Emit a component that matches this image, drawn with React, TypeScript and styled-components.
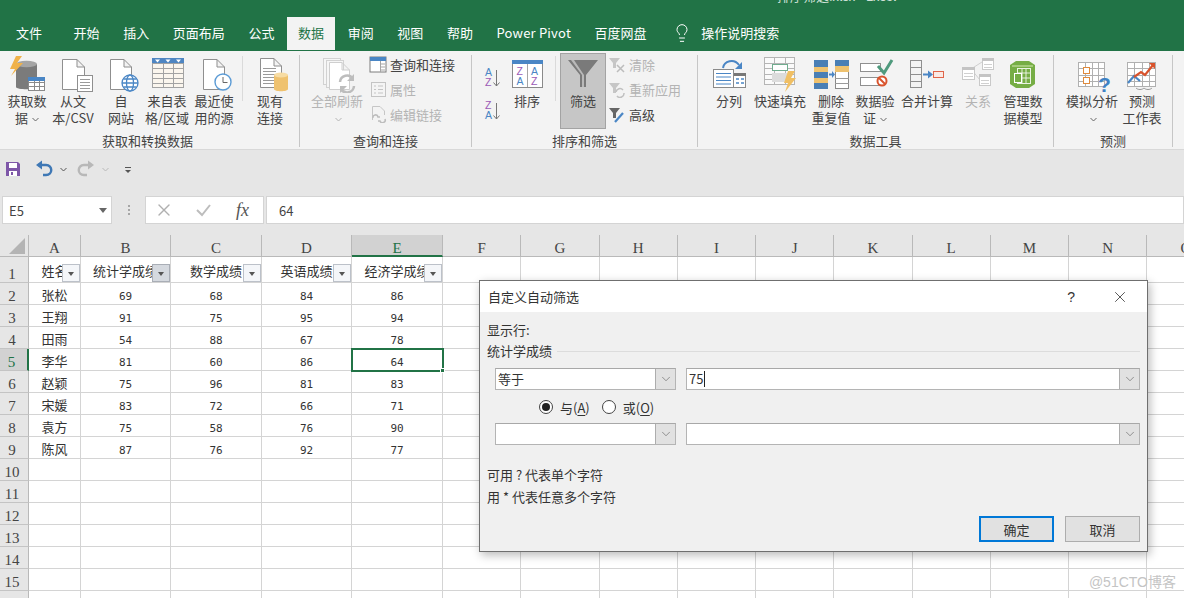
import React from "react";
import styled, { createGlobalStyle } from "styled-components";
import { Lightbulb, X, ChevronDown } from "lucide-react";

const CJK = `"Noto Sans CJK SC", "Noto Sans", sans-serif`;

const Global = createGlobalStyle`
  html, body { margin: 0; padding: 0; height: 598px; overflow: hidden; background: #fff; }
  body { font-family: ${CJK}; }
  * { box-sizing: border-box; }
`;

const Page = styled.div`
  position: relative;
  width: 1184px;
  height: 598px;
  overflow: hidden;
  display: flex;
  flex-direction: column;
  background: #e6e6e6;
`;

const TitleBar = styled.div`
  height: 51px;
  background: #217346;
  flex: none;
  display: flex;
  flex-direction: column;
  overflow: hidden;
`;
const CutTitle = styled.div`
  height: 28px;
  margin-top: -11px;
  padding-left: 777px;
  color: #cfe0d6;
  font-size: 13px;
  line-height: 13px;
  white-space: nowrap;
  flex: none;
`;
const Tabs = styled.div`
  display: flex;
  align-items: stretch;
  height: 33px;
  padding-left: 5px;
  gap: 1.6px;
  flex: none;
`;
const Tab = styled.div<{ $active?: boolean; $gapAfter?: number; $spaced?: boolean }>`
  padding: 0 11px 2px;
  display: flex;
  align-items: center;
  font-size: 13px;
  white-space: nowrap;
  letter-spacing: ${(p) => (p.$spaced ? "0.2px" : "0")};
  color: ${(p) => (p.$active ? "#217346" : "#fff")};
  background: ${(p) => (p.$active ? "#f3f3f3" : "transparent")};
  margin-right: ${(p) => p.$gapAfter ?? 0}px;
`;
const SearchHint = styled.div`
  display: flex;
  align-items: center;
  gap: 9px;
  margin-left: 13px;
  padding-bottom: 2px;
  color: #fff;
  font-size: 13px;
  white-space: nowrap;
`;

const Ribbon = styled.div`
  height: 99px;
  flex: none;
  background: #f3f3f3;
  display: flex;
  border-bottom: 1px solid #d8d8d8;
  box-shadow: 0 1px 0 #dcdcdc;
`;
const Group = styled.div<{ $w: number; $pr?: number }>`
  width: ${(p) => p.$w}px;
  height: 92px;
  margin-top: 4px;
  flex: none;
  display: flex;
  flex-direction: column;
  border-right: 1px solid #c6c6c6;
  padding-right: ${(p) => p.$pr ?? 0}px;
`;
const GroupBody = styled.div<{ $pl?: number }>`
  flex: 1;
  display: flex;
  padding-left: ${(p) => p.$pl ?? 0}px;
  min-height: 0;
`;
const GroupLabel = styled.div`
  height: 12px;
  line-height: 12px;
  font-size: 13px;
  color: #444;
  text-align: center;
  white-space: nowrap;
`;
const LargeButton = styled.div<{ $w: number; $off?: boolean }>`
  width: ${(p) => p.$w}px;
  flex: none;
  display: flex;
  flex-direction: column;
  align-items: center;
  color: ${(p) => (p.$off ? "#b4b4b4" : "#444")};
`;
const IconSlot = styled.div`
  height: 38px;
  flex: none;
  display: flex;
`;
const BtnText = styled.div`
  font-size: 13px;
  line-height: 16.5px;
  text-align: center;
  white-space: nowrap;
`;
const Caret = styled.svg`
  display: inline-block;
  width: 7px;
  height: 5px;
  vertical-align: 1px;
  margin-left: 4px;
`;
const GroupSep = styled.div<{ $l: number; $r: number }>`
  width: 1px;
  height: 45px;
  margin: 1px ${(p) => p.$r}px 0 ${(p) => p.$l}px;
  background: #dadada;
  flex: none;
`;
const SmallList = styled.div<{ $ml: number }>`
  margin-top: -3px;
  margin-left: ${(p) => p.$ml}px;
  display: flex;
  flex-direction: column;
`;
const SmallRow = styled.div<{ $off?: boolean }>`
  height: 25px;
  display: flex;
  align-items: center;
  gap: 3px;
  font-size: 13px;
  white-space: nowrap;
  color: ${(p) => (p.$off ? "#b4b4b4" : "#444")};
`;
const SortStack = styled.div`
  width: 25px;
  margin-left: 11px;
  display: flex;
  flex-direction: column;
  gap: 9px;
  padding-top: 11px;
`;
const FilterButton = styled.div`
  width: 46px;
  height: 76px;
  margin-top: -2px;
  background: #c6c6c6;
  border: 1px solid #a3a3a3;
  display: flex;
  flex-direction: column;
  align-items: center;
  color: #444;
  flex: none;
`;
const FilterIconSlot = styled.div`
  height: 39px;
  flex: none;
`;

const Qat = styled.div`
  height: 46px;
  flex: none;
  display: flex;
  align-items: flex-start;
  padding: 10px 0 0 5px;
  background: #e6e6e6;
`;
const QatCaret = styled.svg<{ $ml: number; $mr: number }>`
  width: 7px;
  height: 5px;
  margin: 7px ${(p) => p.$mr}px 0 ${(p) => p.$ml}px;
  flex: none;
`;

const FormulaRow = styled.div`
  height: 39px;
  flex: none;
  display: flex;
  align-items: flex-start;
  padding-left: 2px;
  background: #e6e6e6;
`;
const NameBox = styled.div`
  width: 110px;
  height: 28px;
  background: #fff;
  border: 1px solid #d4d4d4;
  display: flex;
  align-items: center;
  justify-content: space-between;
  padding: 0 4px 0 6px;
  font-size: 13px;
  color: #444;
`;
const Dots = styled.div`
  width: 33px;
  height: 28px;
  display: flex;
  flex-direction: column;
  align-items: center;
  justify-content: center;
  gap: 2px;
  & > i {
    width: 2px;
    height: 2px;
    background: #a6a6a6;
    display: block;
  }
`;
const FnBox = styled.div`
  width: 119px;
  height: 28px;
  background: #fff;
  border: 1px solid #d4d4d4;
  display: flex;
  align-items: center;
  padding-left: 8px;
  gap: 18px;
  flex: none;
`;
const FxText = styled.span`
  font-family: "Liberation Serif", serif;
  font-style: italic;
  font-size: 18px;
  color: #555;
  margin-left: 4px;
`;
const FormulaBox = styled.div`
  flex: 1;
  height: 28px;
  margin-left: 2px;
  background: #fff;
  border: 1px solid #d4d4d4;
  display: flex;
  align-items: center;
  padding-left: 12px;
  font-size: 13px;
  color: #444;
`;

const Sheet = styled.div`
  display: grid;
  grid-template-columns: 29px 52px 90px 91px 90px 91px repeat(10, 78.25px);
  grid-template-rows: 22px 26px repeat(15, 22px);
  background: #fff;
  flex: none;
  overflow: hidden;
`;
const Corner = styled.div`
  background: #e6e6e6;
  border-right: 1px solid #b9b9b9;
  border-bottom: 1px solid #b9b9b9;
  display: flex;
  align-items: flex-end;
  justify-content: flex-end;
  padding: 0 3px 2px 0;
`;
const ColHead = styled.div<{ $sel?: boolean }>`
  background: ${(p) => (p.$sel ? "#d2d2d2" : "#e6e6e6")};
  border-right: 1px solid #b9b9b9;
  border-bottom: ${(p) => (p.$sel ? "2px solid #217346" : "1px solid #b9b9b9")};
  color: ${(p) => (p.$sel ? "#217346" : "#444")};
  font-family: "Liberation Serif", serif;
  font-size: 15px;
  text-align: center;
  line-height: 26px;
`;
const RowHead = styled.div<{ $sel?: boolean }>`
  background: ${(p) => (p.$sel ? "#d2d2d2" : "#e6e6e6")};
  border-right: ${(p) => (p.$sel ? "2px solid #217346" : "1px solid #b9b9b9")};
  border-bottom: 1px solid #c4c4c4;
  color: ${(p) => (p.$sel ? "#217346" : "#444")};
  font-family: "Liberation Serif", serif;
  font-size: 15px;
  display: flex;
  align-items: flex-end;
  justify-content: center;
  padding: 0 4px 0 0;
  line-height: 15px;
`;
const Cell = styled.div<{ $sel?: boolean; $num?: boolean }>`
  position: relative;
  border-right: 1px solid #d4d4d4;
  border-bottom: 1px solid #d4d4d4;
  font-family: ${(p) => (p.$num ? `"DejaVu Sans Mono", monospace` : CJK)};
  font-size: ${(p) => (p.$num ? "11px" : "13px")};
  color: #333;
  text-align: center;
  white-space: nowrap;
  overflow: ${(p) => (p.$sel ? "visible" : "hidden")};
  display: flex;
  align-items: flex-end;
  justify-content: center;
  line-height: ${(p) => (p.$num ? "15px" : "18px")};
  ${(p) => (p.$sel ? "outline: 2px solid #217346; outline-offset: -1px; z-index: 2;" : "")}
`;
const HeaderCell = styled(Cell)`
  align-items: flex-start;
  padding-top: 5px;
  line-height: 18px;
`;
const FillHandle = styled.span`
  position: absolute;
  right: -3px;
  bottom: -3px;
  width: 5px;
  height: 5px;
  background: #217346;
  border: 1px solid #fff;
`;
const FilterToggle = styled.span<{ $on?: boolean }>`
  position: absolute;
  right: 0;
  top: 7px;
  width: 18px;
  height: 18px;
  background: ${(p) => (p.$on ? "#d5d9df" : "#f4f6f9")};
  border: 1px solid ${(p) => (p.$on ? "#a9aeb6" : "#bcc1c9")};
  display: flex;
  align-items: center;
  justify-content: center;
  &::after {
    content: "";
    border-left: 3.5px solid transparent;
    border-right: 3.5px solid transparent;
    border-top: 4px solid #555;
    margin-top: 2px;
  }
`;

const Dialog = styled.div`
  position: absolute;
  left: 479px;
  top: 280px;
  width: 669px;
  height: 272px;
  background: #f0f0f0;
  border: 1px solid #6f6f6f;
  box-shadow: 2px 3px 9px rgba(0, 0, 0, 0.28);
  z-index: 5;
  display: flex;
  flex-direction: column;
  color: #333;
  font-size: 13px;
`;
const DialogTitle = styled.div`
  height: 31px;
  background: #fff;
  flex: none;
  display: flex;
  align-items: center;
  padding: 0 18px 0 8px;
  color: #333;
`;
const DialogTitleText = styled.div`
  flex: 1;
`;
const HelpMark = styled.span`
  font-family: "Liberation Sans", sans-serif;
  font-size: 14px;
  margin-right: 36px;
`;
const DialogBody = styled.div`
  flex: 1;
  padding: 9px 7px 0 7px;
  display: flex;
  flex-direction: column;
`;
const BodyLine = styled.div<{ $mt?: number }>`
  line-height: 18px;
  margin-top: ${(p) => p.$mt ?? 0}px;
  white-space: nowrap;
`;
const FieldTitle = styled.div`
  margin-top: 3px;
  display: flex;
  align-items: center;
  gap: 5px;
  line-height: 18px;
  &::after {
    content: "";
    flex: 1;
    height: 1px;
    background: #dcdcdc;
  }
`;
const ComboRow = styled.div<{ $mt: number }>`
  display: flex;
  gap: 10px;
  margin-top: ${(p) => p.$mt}px;
  padding-left: 8px;
`;
const Combo = styled.div<{ $w: number }>`
  width: ${(p) => p.$w}px;
  height: 22px;
  background: #fff;
  border: 1px solid #b4b4b4;
  border-top-color: #a8a8a8;
  display: flex;
  align-items: stretch;
  flex: none;
`;
const ComboValue = styled.div`
  flex: 1;
  padding-left: 2px;
  display: flex;
  align-items: center;
  line-height: 18px;
`;
const Caretline = styled.span`
  width: 1px;
  height: 16px;
  background: #222;
  margin-left: 1px;
`;
const ComboArrow = styled.div`
  width: 20px;
  background: #e1e1e1;
  border-left: 1px solid #adadad;
  display: flex;
  align-items: center;
  justify-content: center;
  color: #555;
`;
const RadioRow = styled.div`
  display: flex;
  align-items: center;
  height: 18px;
  margin-top: 8px;
  padding-left: 52px;
`;
const Radio = styled.span<{ $on?: boolean }>`
  width: 14px;
  height: 14px;
  border-radius: 50%;
  border: 1px solid #444;
  background: #fff;
  margin-right: 7px;
  flex: none;
  display: flex;
  align-items: center;
  justify-content: center;
  &::after {
    content: "";
    width: 8px;
    height: 8px;
    border-radius: 50%;
    background: ${(p) => (p.$on ? "#222" : "transparent")};
  }
`;
const RadioText = styled.span<{ $mr?: number }>`
  margin-right: ${(p) => p.$mr ?? 0}px;
  white-space: nowrap;
  & u {
    text-underline-offset: 2px;
  }
`;
const DialogButtons = styled.div`
  display: flex;
  justify-content: flex-end;
  gap: 11px;
  margin-top: 10px;
`;
const DlgButton = styled.div<{ $primary?: boolean }>`
  width: 75px;
  height: 26px;
  background: #e1e1e1;
  border: ${(p) => (p.$primary ? "2px solid #0078d7" : "1px solid #adadad")};
  display: flex;
  align-items: center;
  justify-content: center;
  color: #333;
`;
const Watermark = styled.div`
  position: absolute;
  right: 8px;
  bottom: 7px;
  font-family: "Liberation Sans", ${CJK};
  font-size: 14px;
  color: #c4c4c4;
  z-index: 6;
  line-height: 18px;
`;

/* ---------- icons ---------- */
const G = "#8f8f8f";
const BL = "#4a86c5";
const Y = "#efc26f";

const Page1 = ({ x, y, w, h, c = G }: { x: number; y: number; w: number; h: number; c?: string }) => (
  <path d={`M${x + 0.5} ${y + 0.5}H${x + w - 8}L${x + w - 0.5} ${y + 8}V${y + h - 0.5}H${x + 0.5}ZM${x + w - 8} ${y + 0.5}V${y + 8}H${x + w - 0.5}`} fill="#fff" stroke={c} strokeWidth="1" />
);
const Lines = ({ x, y, w, n, step = 3, c = "#9a9a9a" }: { x: number; y: number; w: number; n: number; step?: number; c?: string }) => (
  <g stroke={c} strokeWidth="1">
    {Array.from({ length: n }).map((_, i) => (
      <path key={i} d={`M${x} ${y + i * step + 0.5}H${x + w}`} />
    ))}
  </g>
);
const Ico = ({ w, children, h = 38 }: { w: number; h?: number; children: React.ReactNode }) => (
  <svg width={w} height={h} viewBox={`0 0 ${w} ${h}`} style={{ display: "block" }}>
    {children}
  </svg>
);
const GridLines = ({ x, y, w, h, cols, rows, c = "#a8a8a8" }: { x: number; y: number; w: number; h: number; cols: number; rows: number; c?: string }) => (
  <g stroke={c} strokeWidth="1" fill="none">
    {Array.from({ length: cols - 1 }).map((_, i) => (
      <path key={"c" + i} d={`M${Math.round(x + ((i + 1) * w) / cols) + 0.5} ${y}V${y + h}`} />
    ))}
    {Array.from({ length: rows - 1 }).map((_, i) => (
      <path key={"r" + i} d={`M${x} ${Math.round(y + ((i + 1) * h) / rows) + 0.5}H${x + w}`} />
    ))}
    <rect x={x + 0.5} y={y + 0.5} width={w - 1} height={h - 1} />
  </g>
);

const IGetData = () => (
  <Ico w={44}>
    <path d="M11 9V32C11 35 32 35 32 32V9Z" fill="#7b7b7b" />
    <ellipse cx="21.5" cy="9" rx="10.5" ry="3.2" fill="#a5a5a5" />
    <path d="M17 1H11L5 14H10L6 21L18 8H12Z" fill="#f0b24a" />
    <rect x="23" y="22" width="17" height="14" fill="#fff" />
    <GridLines x={23} y={22} w={17} h={14} cols={3} rows={3} c="#8a8a8a" />
    <rect x="23" y="22" width="17" height="4" fill={BL} />
  </Ico>
);
const IText = () => (
  <Ico w={48}>
    <Page1 x={13} y={4} w={23} h={31} />
    <rect x="28.5" y="20.5" width="15" height="16" fill="#fff" stroke={G} />
    <Lines x={31} y={24} w={10} n={4} />
  </Ico>
);
const IWeb = () => (
  <Ico w={48}>
    <Page1 x={13} y={4} w={22} h={31} />
    <g fill="#fff" stroke={BL} strokeWidth="1.3">
      <circle cx="33" cy="28" r="8" />
      <ellipse cx="33" cy="28" rx="3.5" ry="8" />
      <path d="M25 28H41M26.5 24H39.5M26.5 32H39.5" fill="none" />
    </g>
  </Ico>
);
const ITable = () => (
  <Ico w={44}>
    <rect x="7" y="3" width="32" height="30" fill="#fbf6ee" />
    <GridLines x={7} y={3} w={32} h={30} cols={3} rows={6} c="#a3a3a3" />
    <rect x="7" y="3" width="32" height="5" fill="#4f86c2" />
    <path d="M10 4.5h5l-2.5 3zM20.500 4.500h5l-2.500 3zM31 4.500h5l-2.500 3z" fill="#fff" />
  </Ico>
);
const IRecent = () => (
  <Ico w={50}>
    <Page1 x={14} y={4} w={22} h={31} />
    <circle cx="34" cy="27" r="8" fill="#fff" stroke="#5b9bd5" strokeWidth="1.4" />
    <path d="M34 22V27.500H38.500" fill="none" stroke="#666" strokeWidth="1" />
  </Ico>
);
const IExisting = () => (
  <Ico w={50}>
    <Page1 x={15} y={3} w={22} h={30} />
    <Lines x={18} y={13} w={13} n={6} step={3} />
    <path d="M29 20V34C29 37 43 37 43 34V20Z" fill={Y} />
    <ellipse cx="36" cy="20" rx="7" ry="2.500" fill="#f7dca3" />
  </Ico>
);
const IRefreshAll = () => (
  <Ico w={54}>
    <rect x="13.500" y="3.500" width="17" height="26" fill="#f6f6f6" stroke="#d2d2d2" />
    <rect x="16.500" y="5.500" width="17" height="27" fill="#f6f6f6" stroke="#d2d2d2" />
    <Page1 x={19} y={7} w={21} h={28} c="#cfcfcf" />
    <path d="M30 27A7 7 0 0 1 43 24M44 31A7 7 0 0 1 31 34" fill="none" stroke="#bdbdbd" strokeWidth="2.500" />
    <path d="M44 19V26H37ZM30 38V31H37Z" fill="#bdbdbd" />
  </Ico>
);
const IQuery = () => (
  <Ico w={18} h={17}>
    <rect x="1" y="1" width="16" height="15" fill="#fff" stroke="#7d7d7d" />
    <rect x="1" y="1" width="16" height="4" fill={BL} />
    <path d="M11.500 5V16M12 8H16M12 11H16M12 14H16" stroke="#a5a5a5" fill="none" />
  </Ico>
);
const IProps = () => (
  <Ico w={18} h={17}>
    <rect x="2.500" y="1.500" width="14" height="14" fill="#f4f4f4" stroke="#c4c4c4" />
    <path d="M5 5H7M5 8.500H7M5 12H7M9 5H14M9 8.500H14M9 12H14" stroke="#c4c4c4" />
  </Ico>
);
const ILinks = () => (
  <Ico w={18} h={17}>
    <path d="M3.500 0.500H11L15.500 5V9M3.500 0.500V14" fill="none" stroke="#c6c6c6" />
    <path d="M4 12A2.500 2.500 0 0 1 9 11H11M16 13A2.500 2.500 0 0 1 11 15H9" fill="none" stroke="#bdbdbd" strokeWidth="1.600" />
  </Ico>
);
const AzText = styled.text<{ $c: string }>`
  font-family: "Liberation Sans", sans-serif;
  font-size: 10.5px;
  font-weight: 400;
  fill: ${(p) => p.$c};
`;
const ISortAZ = ({ flip }: { flip?: boolean }) => (
  <Ico w={24} h={24}>
    <AzText x="2" y="10" $c={flip ? "#9b59b6" : BL}>{flip ? "Z" : "A"}</AzText>
    <AzText x="2" y="20" $c={flip ? BL : "#9b59b6"}>{flip ? "A" : "Z"}</AzText>
    <path d="M13.500 4V20M10.500 16.500L13.500 20L16.500 16.500" fill="none" stroke="#777" />
  </Ico>
);
const ISortBig = () => (
  <Ico w={38}>
    <rect x="4.500" y="5.500" width="30" height="27" fill="#fff" stroke="#8a8a8a" />
    <path d="M19.500 5V32" stroke="#a5a5a5" />
    <rect x="4" y="5" width="31" height="4" fill={BL} />
    <AzText x="8.500" y="20" $c="#9b59b6">Z</AzText>
    <AzText x="8.500" y="30" $c={BL}>A</AzText>
    <AzText x="23" y="20" $c={BL}>A</AzText>
    <AzText x="23" y="30" $c="#9b59b6">Z</AzText>
  </Ico>
);
const IFunnel = () => (
  <Ico w={44} h={39}>
    <path d="M7 6H37L25 21V33H19V21Z" fill="#7a7a7a" />
    <path d="M10 6L21 21V33H23V21L13 6Z" fill="#b9b9b9" />
  </Ico>
);
const SmallFunnel = ({ c }: { c: string }) => <path d="M1 2H12L8 7V12H5V7Z" fill={c} />;
const IClear = () => (
  <Ico w={18} h={17}>
    <SmallFunnel c="#c6c6c6" />
    <path d="M9 9L16 16M16 9L9 16" stroke="#bcbcbc" strokeWidth="1.500" />
  </Ico>
);
const IReapply = () => (
  <Ico w={18} h={17}>
    <SmallFunnel c="#c6c6c6" />
    <path d="M8 11A4 4 0 0 1 15 9M16 12A4 4 0 0 1 9 15" fill="none" stroke="#c0c0c0" strokeWidth="1.500" />
  </Ico>
);
const IAdvanced = () => (
  <Ico w={18} h={17}>
    <SmallFunnel c="#666" />
    <path d="M7 16L15 7" stroke={BL} strokeWidth="2.200" />
  </Ico>
);
const ISplit = () => (
  <Ico w={42}>
    <path d="M15 13C16 6 26 3 31 10" fill="none" stroke={BL} strokeWidth="2" />
    <path d="M34 7V14H27Z" fill={BL} />
    <rect x="5.500" y="14.500" width="20" height="18" fill="#fff" stroke="#8a8a8a" />
    <Lines x={8} y={18} w={15} n={4} step={3.500} c={BL} />
    <rect x="25.500" y="18.500" width="12" height="14" fill="#fff" stroke="#8a8a8a" />
    <rect x="26" y="18" width="12" height="3" fill="#777" />
    <path d="M28 24H31M33 24H36M28 28H31M33 28H36" stroke={BL} strokeWidth="1.500" />
  </Ico>
);
const IFlash = () => (
  <Ico w={60}>
    <rect x="14" y="2" width="31" height="28" fill="#fafafa" />
    <GridLines x={14} y={2} w={31} h={28} cols={3} rows={5} c="#b5b5b5" />
    <rect x="22.500" y="9.500" width="15" height="6" fill="#fff" stroke="#70ad8f" />
    <rect x="22" y="18" width="15" height="9" fill="#dcdcdc" />
    <path d="M45 16H38L34 28H38L35 37L46 23H41Z" fill="#f0bf63" />
  </Ico>
);
const IDedupe = () => (
  <Ico w={42}>
    {[4, 25].map((x, k) => (
      <g key={x}>
        <rect x={x + 0.5} y="5.500" width="13" height="28" fill="#fff" stroke="#8a8a8a" />
        {k === 0 ? (
          <>
            <rect x={x} y="5" width="14" height="7" fill="#4a7fb5" />
            <rect x={x} y="12" width="14" height="5" fill={Y} />
            <rect x={x} y="17" width="14" height="6" fill="#4a7fb5" />
            <rect x={x} y="23" width="14" height="5" fill={Y} />
            <rect x={x} y="28" width="14" height="6" fill="#4a7fb5" />
          </>
        ) : (
          <>
            <rect x={x} y="5" width="14" height="6" fill="#4a7fb5" />
            <rect x={x} y="11" width="14" height="6" fill={Y} />
            <path d={`M${x} 23.500H${x + 14}M${x} 28.500H${x + 14}`} stroke="#9a9a9a" />
          </>
        )}
      </g>
    ))}
    <path d="M19 19.500H23" stroke={BL} strokeWidth="2" />
    <path d="M22 16V23L25 19.500Z" fill={BL} />
  </Ico>
);
const IValidate = () => (
  <Ico w={46}>
    <rect x="8.500" y="8.500" width="20" height="8" fill="#fff" stroke="#8f8f8f" />
    <rect x="8.500" y="22.500" width="20" height="8" fill="#fff" stroke="#8f8f8f" />
    <path d="M26 11L32 18L40 5" fill="none" stroke="#4f9a7d" strokeWidth="3" />
    <circle cx="30" cy="26" r="4.500" fill="#fff" stroke="#d9532c" strokeWidth="2" />
    <path d="M27 23L33 29" stroke="#d9532c" strokeWidth="2" />
  </Ico>
);
const IConsolidate = () => (
  <Ico w={58}>
    <GridLines x={12} y={5} w={12} h={28} cols={1} rows={4} c="#8f8f8f" />
    <path d="M25 19.500H31" stroke={BL} strokeWidth="2" />
    <path d="M30 15.500V23.500L35 19.500Z" fill={BL} />
    <rect x="35.500" y="16.500" width="10" height="6" fill="#fbeae5" stroke="#e0654a" />
  </Ico>
);
const IRelations = () => (
  <Ico w={44}>
    <path d="M15 14L26 7M15 14L24 25" stroke="#d0d0d0" fill="none" />
    {[[6, 12, 13, 13], [26, 3, 12, 12], [23, 19, 12, 12]].map(([x, y, w, h]) => (
      <g key={x}>
        <rect x={x + 0.5} y={y + 0.5} width={w - 1} height={h - 1} fill="#fff" stroke="#c9c9c9" />
        <rect x={x} y={y} width={w} height="3" fill="#c4c4c4" />
        <path d={`M${x + 2} ${y + 6.500}H${x + w - 2}M${x + 2} ${y + 9.500}H${x + w - 2}`} stroke="#d0d0d0" />
      </g>
    ))}
  </Ico>
);
const IModel = () => (
  <Ico w={46}>
    <path d="M10 10L16 6H29L35 10V29L29 33H16L10 29Z" fill="#76ad45" />
    <path d="M12 11H33" stroke="#a5cc7b" strokeWidth="2" />
    <rect x="17.500" y="13.500" width="13" height="15" fill="none" stroke="#fff" strokeOpacity=".85" />
    <path d="M22 14V28M26 14V28M18 18H30M18 23H30" stroke="#fff" strokeOpacity=".8" />
    <rect x="14.500" y="18.500" width="7" height="9" fill="#76ad45" stroke="#fff" />
  </Ico>
);
const QText = styled.text`
  font-family: "Liberation Sans", sans-serif;
  font-weight: 700;
  font-size: 21px;
  fill: #3f82c4;
`;
const IWhatIf = () => (
  <Ico w={56}>
    <rect x="14" y="7" width="27" height="25" fill="#fff" />
    <GridLines x={14} y={7} w={27} h={25} cols={4} rows={4} c="#b0b0b0" />
    <rect x="19.500" y="12.500" width="6" height="6" fill="#fff" stroke="#e08a3c" />
    <rect x="19.500" y="22.500" width="6" height="6" fill="#fff" stroke="#e08a3c" />
    <QText x="34" y="37">?</QText>
  </Ico>
);
const IForecast = () => (
  <Ico w={44}>
    <rect x="7" y="7" width="29" height="25" fill="#fff" />
    <GridLines x={7} y={7} w={29} h={25} cols={4} rows={4} c="#b0b0b0" />
    <path d="M8 28L14 21L20 26" fill="none" stroke={BL} strokeWidth="2.200" />
    <path d="M14 22L21 17L25 20L33 10" fill="none" stroke="#d9532c" strokeWidth="2.200" />
    <path d="M29 8H35V14Z" fill="#d9532c" />
    <path d="M16 33C18 35 22 35 24 33M24 33C26 35 30 35 32 33" fill="none" stroke="#9a9a9a" />
  </Ico>
);

const Down = ({ c = "#666" }: { c?: string }) => (
  <Caret viewBox="0 0 7 5">
    <path d="M0.500 1L3.500 4L6.500 1" fill="none" stroke={c} />
  </Caret>
);

const Tabs0 = ["开始", "插入", "页面布局", "公式", "数据", "审阅", "视图", "帮助", "Power Pivot", "百度网盘"];

type Row = [string, number, number, number, number];
const rows: Row[] = [
  ["张松", 69, 68, 84, 86],
  ["王翔", 91, 75, 95, 94],
  ["田雨", 54, 88, 67, 78],
  ["李华", 81, 60, 86, 64],
  ["赵颖", 75, 96, 81, 83],
  ["宋媛", 83, 72, 66, 71],
  ["袁方", 75, 58, 76, 90],
  ["陈风", 87, 76, 92, 77],
];
const letters = "ABCDEFGHIJKLMNO".split("");
const heads = ["姓名", "统计学成绩", "数学成绩", "英语成绩", "经济学成绩"];

const SheetGrid = () => {
  const out: React.ReactNode[] = [];
  out.push(
    <Corner key="corner">
      <svg width="16" height="16" viewBox="0 0 16 16">
        <path d="M16 0V16H0Z" fill="#b4b4b4" />
      </svg>
    </Corner>
  );
  letters.forEach((l) => out.push(<ColHead key={l} $sel={l === "E"}>{l}</ColHead>));
  for (let r = 1; r <= 16; r++) {
    out.push(<RowHead key={"r" + r} $sel={r === 5}>{r}</RowHead>);
    for (let c = 0; c < 15; c++) {
      const key = `${r}-${c}`;
      if (r === 1 && c < 5) {
        out.push(
          <HeaderCell key={key}>
            {heads[c]}
            <FilterToggle $on={c === 1} />
          </HeaderCell>
        );
      } else if (r > 1 && r <= 9 && c < 5) {
        const v = rows[r - 2][c];
        const sel = r === 5 && c === 4;
        out.push(
          <Cell key={key} $num={c > 0} $sel={sel}>
            {v}
            {sel && <FillHandle />}
          </Cell>
        );
      } else {
        out.push(<Cell key={key} />);
      }
    }
  }
  return <Sheet>{out}</Sheet>;
};

export default function App() {
  return (
    <Page>
      <Global />
      <TitleBar>
        <CutTitle>排序筛选.xlsx - Excel</CutTitle>
        <Tabs>
          <Tab $gapAfter={8}>文件</Tab>
          {Tabs0.map((t) => (
            <Tab key={t} $active={t === "数据"} $spaced={t === "Power Pivot"}>{t}</Tab>
          ))}
          <SearchHint>
            <Lightbulb size={20} strokeWidth={1.2} />
            操作说明搜索
          </SearchHint>
        </Tabs>
      </TitleBar>

      <Ribbon>
        <Group $w={300} $pr={4}>
          <GroupBody $pl={5}>
            <LargeButton $w={44}><IconSlot><IGetData /></IconSlot><BtnText>获取数<br />据<Down /></BtnText></LargeButton>
            <LargeButton $w={48}><IconSlot><IText /></IconSlot><BtnText>从文<br />本/CSV</BtnText></LargeButton>
            <LargeButton $w={48}><IconSlot><IWeb /></IconSlot><BtnText>自<br />网站</BtnText></LargeButton>
            <LargeButton $w={44}><IconSlot><ITable /></IconSlot><BtnText>来自表<br />格/区域</BtnText></LargeButton>
            <LargeButton $w={50}><IconSlot><IRecent /></IconSlot><BtnText>最近使<br />用的源</BtnText></LargeButton>
            <GroupSep $l={3} $r={2} />
            <LargeButton $w={50}><IconSlot><IExisting /></IconSlot><BtnText>现有<br />连接</BtnText></LargeButton>
          </GroupBody>
          <GroupLabel>获取和转换数据</GroupLabel>
        </Group>
        <Group $w={172}>
          <GroupBody $pl={10}>
            <LargeButton $w={54} $off><IconSlot><IRefreshAll /></IconSlot><BtnText>全部刷新<br /><Down c="#b4b4b4" /></BtnText></LargeButton>
            <SmallList $ml={5}>
              <SmallRow><IQuery />查询和连接</SmallRow>
              <SmallRow $off><IProps />属性</SmallRow>
              <SmallRow $off><ILinks />编辑链接</SmallRow>
            </SmallList>
          </GroupBody>
          <GroupLabel>查询和连接</GroupLabel>
        </Group>
        <Group $w={226}>
          <GroupBody>
            <SortStack><ISortAZ /><ISortAZ flip /></SortStack>
            <LargeButton $w={38}><IconSlot><ISortBig /></IconSlot><BtnText>排序</BtnText></LargeButton>
            <GroupSep $l={9} $r={4} />
            <FilterButton><FilterIconSlot><IFunnel /></FilterIconSlot><BtnText>筛选</BtnText></FilterButton>
            <SmallList $ml={2}>
              <SmallRow $off><IClear />清除</SmallRow>
              <SmallRow $off><IReapply />重新应用</SmallRow>
              <SmallRow><IAdvanced />高级</SmallRow>
            </SmallList>
          </GroupBody>
          <GroupLabel>排序和筛选</GroupLabel>
        </Group>
        <Group $w={356}>
          <GroupBody $pl={10}>
            <LargeButton $w={42}><IconSlot><ISplit /></IconSlot><BtnText>分列</BtnText></LargeButton>
            <LargeButton $w={60}><IconSlot><IFlash /></IconSlot><BtnText>快速填充</BtnText></LargeButton>
            <LargeButton $w={42}><IconSlot><IDedupe /></IconSlot><BtnText>删除<br />重复值</BtnText></LargeButton>
            <LargeButton $w={46}><IconSlot><IValidate /></IconSlot><BtnText>数据验<br />证<Down /></BtnText></LargeButton>
            <LargeButton $w={58}><IconSlot><IConsolidate /></IconSlot><BtnText>合并计算</BtnText></LargeButton>
            <LargeButton $w={44} $off><IconSlot><IRelations /></IconSlot><BtnText>关系</BtnText></LargeButton>
            <LargeButton $w={46}><IconSlot><IModel /></IconSlot><BtnText>管理数<br />据模型</BtnText></LargeButton>
          </GroupBody>
          <GroupLabel>数据工具</GroupLabel>
        </Group>
        <Group $w={119}>
          <GroupBody $pl={10}>
            <LargeButton $w={56}><IconSlot><IWhatIf /></IconSlot><BtnText>模拟分析<br /><Down /></BtnText></LargeButton>
            <LargeButton $w={44}><IconSlot><IForecast /></IconSlot><BtnText>预测<br />工作表</BtnText></LargeButton>
          </GroupBody>
          <GroupLabel>预测</GroupLabel>
        </Group>
      </Ribbon>

      <Qat>
        <svg width="16" height="16" viewBox="0 0 16 16" style={{ marginTop: 1 }}>
          <path d="M1 1H13L15 3V15H1Z" fill="#7e57a8" />
          <rect x="4" y="2" width="8" height="5" fill="#fff" />
          <rect x="4" y="10" width="8" height="5" fill="#fff" />
          <rect x="6" y="11" width="2" height="3" fill="#7e57a8" />
        </svg>
        <svg width="20" height="18" viewBox="0 0 20 18" style={{ marginLeft: 14 }}>
          <path d="M3 5H11C18 5 18 15 11 15H8" fill="none" stroke="#3f78b5" strokeWidth="2.400" />
          <path d="M7 0.500V9.500L1 5Z" fill="#3f78b5" />
        </svg>
        <QatCaret viewBox="0 0 7 5" $ml={5} $mr={8}><path d="M0.500 1L3.500 4L6.500 1" fill="none" stroke="#555" /></QatCaret>
        <svg width="20" height="18" viewBox="0 0 20 18">
          <path d="M17 5H9C2 5 2 15 9 15H12" fill="none" stroke="#b8b8b8" strokeWidth="2.400" />
          <path d="M13 0.500V9.500L19 5Z" fill="#b8b8b8" />
        </svg>
        <QatCaret viewBox="0 0 7 5" $ml={7} $mr={15}><path d="M0.500 1L3.500 4L6.500 1" fill="none" stroke="#b8b8b8" /></QatCaret>
        <svg width="8" height="8" viewBox="0 0 8 8" style={{ marginTop: 6 }}>
          <path d="M1 1.500H7" stroke="#555" />
          <path d="M1 4H7L4 7Z" fill="#555" />
        </svg>
      </Qat>

      <FormulaRow>
        <NameBox>
          E5
          <svg width="8" height="5" viewBox="0 0 8 5"><path d="M0 0H8L4 5Z" fill="#666" /></svg>
        </NameBox>
        <Dots><i /><i /><i /></Dots>
        <FnBox>
          <X size={20} strokeWidth={1.6} color="#b0b0b0" />
          <svg width="22" height="16" viewBox="0 0 22 16"><path d="M5 8L10 13L18 3" fill="none" stroke="#bdbdbd" strokeWidth="2" /></svg>
          <FxText>fx</FxText>
        </FnBox>
        <FormulaBox>64</FormulaBox>
      </FormulaRow>

      <SheetGrid />

      <Dialog>
        <DialogTitle>
          <DialogTitleText>自定义自动筛选</DialogTitleText>
          <HelpMark>?</HelpMark>
          <X size={18} strokeWidth={1} color="#222" />
        </DialogTitle>
        <DialogBody>
          <BodyLine>显示行:</BodyLine>
          <FieldTitle>统计学成绩</FieldTitle>
          <ComboRow $mt={8}>
            <Combo $w={181}>
              <ComboValue>等于</ComboValue>
              <ComboArrow><ChevronDown size={14} strokeWidth={1} /></ComboArrow>
            </Combo>
            <Combo $w={454}>
              <ComboValue>75<Caretline /></ComboValue>
              <ComboArrow><ChevronDown size={14} strokeWidth={1} /></ComboArrow>
            </Combo>
          </ComboRow>
          <RadioRow>
            <Radio $on />
            <RadioText $mr={12}>与(<u>A</u>)</RadioText>
            <Radio />
            <RadioText>或(<u>O</u>)</RadioText>
          </RadioRow>
          <ComboRow $mt={7}>
            <Combo $w={181}>
              <ComboValue />
              <ComboArrow><ChevronDown size={14} strokeWidth={1} /></ComboArrow>
            </Combo>
            <Combo $w={454}>
              <ComboValue />
              <ComboArrow><ChevronDown size={14} strokeWidth={1} /></ComboArrow>
            </Combo>
          </ComboRow>
          <BodyLine $mt={21}>可用 ? 代表单个字符</BodyLine>
          <BodyLine $mt={4}>用 * 代表任意多个字符</BodyLine>
          <DialogButtons>
            <DlgButton $primary>确定</DlgButton>
            <DlgButton>取消</DlgButton>
          </DialogButtons>
        </DialogBody>
      </Dialog>
      <Watermark>@51CTO博客</Watermark>
    </Page>
  );
}
